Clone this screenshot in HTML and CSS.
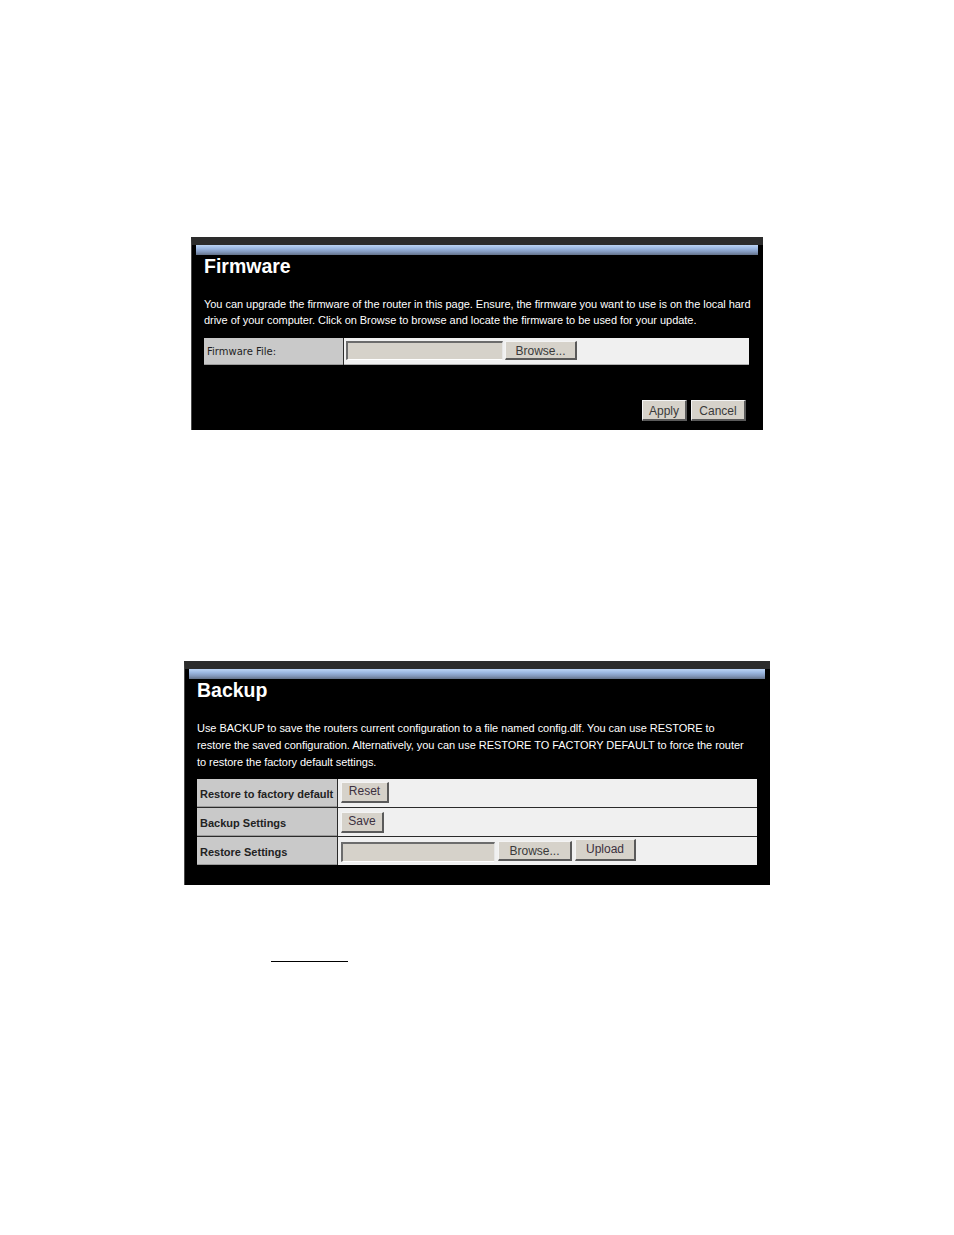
FILE: index.html
```html
<!DOCTYPE html>
<html>
<head>
<meta charset="utf-8">
<link rel="stylesheet" href="styles.css">
</head>
<body>
<div class="page">
  <section class="panel panel-fw">
    <div class="bar"></div>
    <h1 class="title">Firmware</h1>
    <p class="desc desc-fw">You can upgrade the firmware of the router in this page. Ensure, the firmware you want to use is on the local hard<br>drive of your computer. Click on Browse to browse and locate the firmware to be used for your update.</p>
    <div class="table table-fw">
      <div class="row row-fw">
        <div class="label label-fw">Firmware File:</div>
        <div class="value value-fw">
          <span class="input input-fw"></span>
          <span class="btn btn-browse-fw">Browse...</span>
        </div>
      </div>
    </div>
    <div class="actions">
      <span class="btn btn-apply">Apply</span>
      <span class="btn btn-cancel">Cancel</span>
    </div>
  </section>

  <section class="panel panel-bk">
    <div class="bar bar-bk"></div>
    <h1 class="title title-bk">Backup</h1>
    <p class="desc desc-bk">Use BACKUP to save the routers current configuration to a file named config.dlf. You can use RESTORE to<br>restore the saved configuration. Alternatively, you can use RESTORE TO FACTORY DEFAULT to force the router<br>to restore the factory default settings.</p>
    <div class="table table-bk">
      <div class="row row-bk">
        <div class="label label-bk">Restore to factory default</div>
        <div class="value value-bk value-top"><span class="btn btn-reset">Reset</span></div>
      </div>
      <div class="row row-bk">
        <div class="label label-bk">Backup Settings</div>
        <div class="value value-bk value-top2"><span class="btn btn-save">Save</span></div>
      </div>
      <div class="row row-bk">
        <div class="label label-bk">Restore Settings</div>
        <div class="value value-bk value-mid">
          <span class="input input-bk"></span>
          <span class="btn btn-browse-bk">Browse...</span>
          <span class="btn btn-upload">Upload</span>
        </div>
      </div>
    </div>
  </section>

  <div class="rule"></div>
</div>
</body>
</html>
```

FILE: styles.css
```css
html, body {
  margin: 0;
  padding: 0;
  background: #ffffff;
}

.page {
  padding-top: 237px;
  font-family: "Liberation Sans", Arial, sans-serif;
}

.panel {
  background: #000000;
  border-top: 8px solid #2c2c2c;
  border-left: 1px solid #4a4a4a;
  box-sizing: border-box;
  display: flex;
  flex-direction: column;
}

.panel-fw {
  margin-left: 191px;
  width: 572px;
  height: 193px;
}

.panel-bk {
  margin-top: 231px;
  margin-left: 184px;
  width: 586px;
  height: 224px;
}

.bar {
  height: 10px;
  margin: 0 5px 0 4px;
  background: linear-gradient(to bottom, #bcd4f4 0%, #9cb8e2 35%, #8298bc 70%, #64728a 100%);
}

.title {
  margin: 1px 0 0 12px;
  font-size: 19.5px;
  line-height: 20px;
  font-weight: bold;
  color: #ffffff;
}

.title-bk {
  margin-top: 1px;
}

.desc {
  margin: 20px 0 0 12px;
  font-size: 11px;
  line-height: 16px;
  color: #ffffff;
  white-space: nowrap;
  letter-spacing: -0.04px;
}

.desc-bk {
  margin-top: 20px;
  line-height: 17px;
}

.table {
  display: flex;
  flex-direction: column;
  gap: 1px;
  background: #2a2a2a;
}

.table-fw {
  margin: 10px 0 0 12px;
  width: 545px;
}

.table-bk {
  margin: 8px 0 0 12px;
  width: 560px;
}

.row {
  display: flex;
  gap: 1px;
}

.row-fw { height: 27px; }
.row-bk { height: 28px; }

.label {
  background: #c9c9c9;
  color: #1e1e1e;
  display: flex;
  align-items: center;
  box-sizing: border-box;
  padding-left: 3px;
  border-bottom: 1px solid #9a9a9a;
}

.label-fw {
  width: 139px;
  font-family: "DejaVu Sans", Verdana, sans-serif;
  font-size: 10px;
  padding-top: 1px;
}

.label-bk {
  width: 140px;
  font-size: 11px;
  font-weight: bold;
  color: #222222;
  padding-top: 3px;
}

.value {
  flex: 1;
  background: #f0f0f0;
  display: flex;
  gap: 2px;
  box-sizing: border-box;
  padding-left: 2px;
}

.value-fw {
  align-items: flex-start;
  padding-top: 3px;
  border-bottom: 1px solid #b0b0b0;
}

.value-bk { padding-left: 3px; }
.value-top { align-items: flex-start; padding-top: 3px; }
.value-top2 { align-items: flex-start; padding-top: 4px; }
.value-mid { align-items: flex-start; padding-top: 2px; gap: 3px; }

.input {
  display: block;
  box-sizing: border-box;
  height: 19px;
  background: #d6d2ca;
  border-top: 2px solid #6c6c6c;
  border-left: 2px solid #6c6c6c;
  border-right: 1px solid #e6e6e6;
  border-bottom: 1px solid #ffffff;
}

.input-fw { width: 157px; }
.input-bk { width: 154px; height: 20px; margin-top: 3px; }

.btn {
  display: flex;
  align-items: center;
  justify-content: center;
  box-sizing: border-box;
  height: 20px;
  background: #d6d2ca;
  color: #3a3a3a;
  font-family: "Liberation Sans", Arial, sans-serif;
  font-size: 12px;
  border-top: 1px solid #f4f4f4;
  border-left: 1px solid #f4f4f4;
  border-right: 2px solid #5a5a5a;
  border-bottom: 2px solid #5a5a5a;
}

.btn-browse-fw { width: 72px; height: 19px; padding-top: 1px; }
.btn-apply { width: 45px; height: 21px; padding-top: 1px; }
.btn-cancel { width: 55px; height: 21px; padding-top: 1px; }
.btn-reset { width: 48px; height: 21px; padding-bottom: 2px; color: #3c3040; }
.btn-save { width: 43px; height: 21px; padding-bottom: 2px; color: #3c3040; }
.btn-browse-bk { width: 74px; height: 20px; margin-top: 2px; padding-top: 1px; }
.btn-upload { width: 61px; height: 22px; padding-bottom: 1px; color: #3c3040; }

.actions {
  display: flex;
  justify-content: flex-end;
  gap: 4px;
  margin: 35px 17px 0 0;
}

.rule {
  margin: 76px 0 0 271px;
  width: 77px;
  height: 1px;
  background: #000000;
}
```
